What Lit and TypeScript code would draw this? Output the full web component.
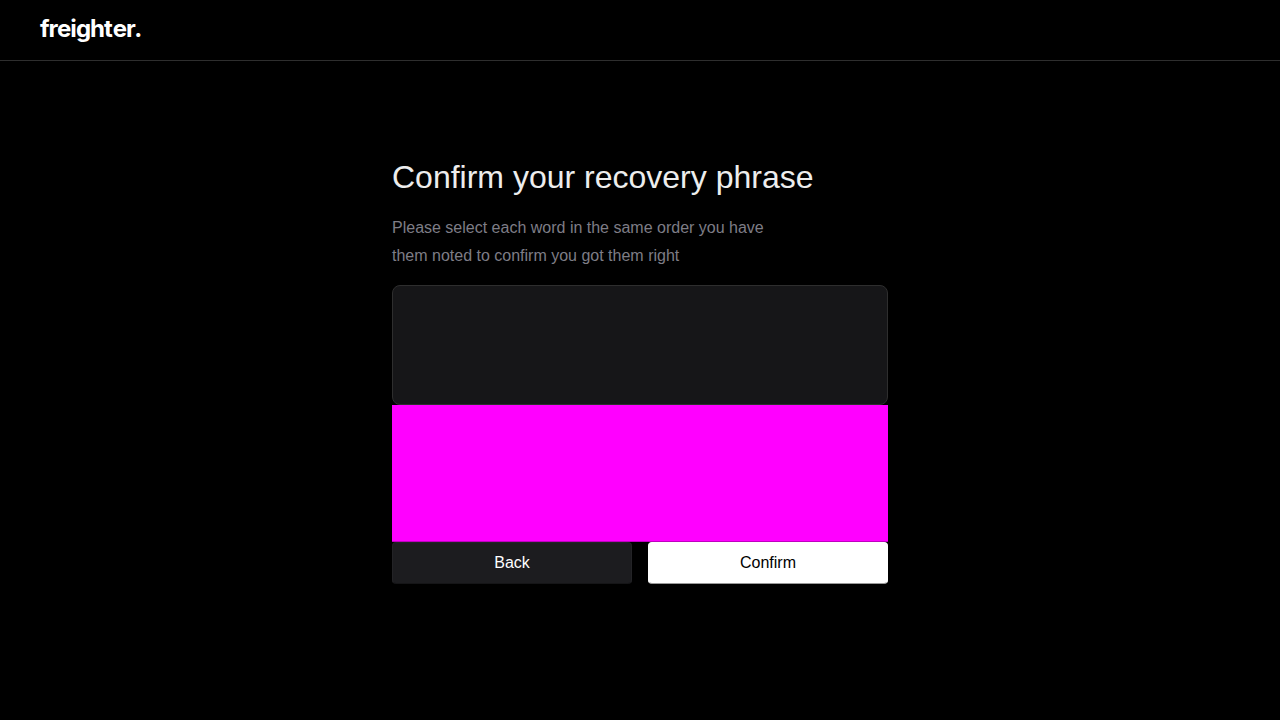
import { LitElement, html, css } from "lit";
import { customElement } from "lit/decorators.js";

@customElement("app-root")
export class AppRoot extends LitElement {
  static styles = css`
    :host {
      display: flex;
      flex-direction: column;
      height: 100vh;
      overflow: hidden;
      background: #000;
      color: #ededed;
      font-family: "Liberation Sans", Helvetica, Arial, sans-serif;
      font-size: 16px;
    }
    * {
      box-sizing: border-box;
    }
    .header {
      height: 61px;
      flex: none;
      padding: 14px 40px 0;
      border-bottom: 1px solid #2e2e2e;
    }
    .logo {
      display: block;
      width: 102px;
      height: 30px;
      overflow: visible;
      fill: #fff;
      font-family: Inter, sans-serif;
      font-size: 24px;
      font-weight: 650;
    }
    .content {
      width: 496px;
      margin: 96px auto 0;
    }
    .title {
      margin: 0;
      font-size: 32px;
      font-weight: 400;
      line-height: 40px;
    }
    .intro {
      width: 400px;
      margin: 17px 0 15px;
      color: #7e7d86;
      line-height: 28px;
    }
    .phrase {
      height: 120px;
      border: 1px solid #2e2e2e;
      border-radius: 8px;
      background: #161618;
    }
    .words {
      height: 137px;
      border-bottom: 1px solid #c000c0;
      background: #f0f;
    }
    .actions {
      display: grid;
      grid-template-columns: 1fr 1fr;
      gap: 16px;
    }
    .button {
      height: 42px;
      padding: 0;
      border: 1px solid #232326;
      border-bottom-color: #151517;
      border-radius: 4px;
      background: #1c1c1f;
      color: #fff;
      font: inherit;
      line-height: 24px;
    }
    .primary {
      border-color: #fff #fff #999;
      background: #fff;
      color: #000;
    }
  `;

  render() {
    return html`
      <header class="header">
        <svg class="logo" viewBox="0 0 102 30" role="img" aria-label="freighter.">
          <text y="23" x="-0.1 8.4 16.9 30.3 35.9 50 64 72.7 86 94.2">freighter.</text>
        </svg>
      </header>
      <main class="content">
        <h1 class="title">Confirm your recovery phrase</h1>
        <div class="intro">
          Please select each word in the same order you have them noted to confirm you got them right
        </div>
        <div class="phrase"></div>
        <div class="words"></div>
        <div class="actions">
          <button class="button">Back</button>
          <button class="button primary">Confirm</button>
        </div>
      </main>
    `;
  }
}
